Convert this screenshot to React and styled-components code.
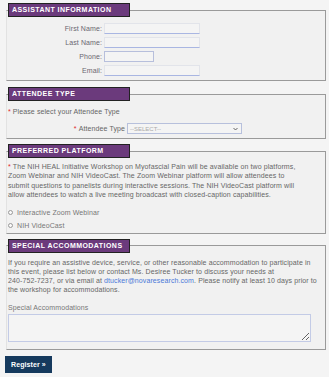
import React from 'react';
import styled, { createGlobalStyle } from 'styled-components';

const GlobalStyle = createGlobalStyle`
  html, body {
    margin: 0;
    padding: 0;
    background: #f4f4f4;
  }
  body {
    font-family: "Liberation Sans", Arial, sans-serif;
    color: #666;
  }
`

const Page = styled.div`
  width: 329px;
  box-sizing: border-box;
  padding: 3px 3px 0 6px;
  display: flex;
  flex-direction: column;
`

const Fieldset = styled.fieldset`
  margin: ${props => props.top || 0}px 0 0 0;
  padding: ${props => props.pad || '0 2px 4px 1px'};
  border: 1px solid #9a9a9a;
  border-left-color: #e2e2e2;
  background: #f1f1f1;
  min-width: 0;
`

const Legend = styled.legend`
  box-sizing: border-box;
  width: 122px;
  height: 14px;
  margin: 0;
  padding: 0 3px;
  background-color: #6b3a7c;
  border: 1px solid #222;
  color: #fff;
  font: bold 7px/12px "Liberation Sans", Arial, sans-serif;
  letter-spacing: 0.45px;
  text-transform: uppercase;
  white-space: nowrap;
`

const Rows = styled.div`
  display: grid;
  grid-template-columns: 94px auto;
  column-gap: 2px;
  row-gap: 3px;
  padding-top: 6px;
  align-items: center;
`

const Label = styled.label`
  font-size: 7px;
  letter-spacing: 0.1px;
  text-align: right;
  color: #6a6670;
  white-space: nowrap;
`

const Input = styled.div`
  box-sizing: border-box;
  width: ${props => props.w}px;
  height: 11px;
  background: #f4f4f4;
  border: 1px solid ${props => (props.boxed ? '#b7bfdc' : '#e2e4ea')};
  border-bottom-color: ${props => (props.boxed ? '#b7bfdc' : '#a9b6e2')};
`

const Text = styled.p`
  margin: 0;
  font-size: 7px;
  letter-spacing: 0.1px;
  line-height: ${props => props.lh || 9}px;
  padding-top: ${props => props.pt || 0}px;
  white-space: nowrap;
  color: #666;
`

const Req = styled.span`
  color: #e0262a;
  margin-right: 2px;
`

const SelectRow = styled.div`
  display: flex;
  align-items: center;
  margin-top: 7px;
`

const SelectLabel = styled.label`
  width: 117px;
  text-align: right;
  font-size: 7px;
  letter-spacing: 0.1px;
  margin-right: 2px;
  white-space: nowrap;
`

const Select = styled.div`
  box-sizing: border-box;
  width: 115px;
  height: 11px;
  border: 1px solid #b7c0dc;
  background: #f4f4f4;
  display: flex;
  align-items: center;
  justify-content: space-between;
  padding: 0 3px 0 2px;
  font-size: 6px;
  color: #aaa;
`

const Radios = styled.div`
  display: flex;
  flex-direction: column;
  gap: 4px;
  margin-top: 8px;
`

const RadioItem = styled.label`
  display: flex;
  align-items: center;
  gap: 4px;
  font-size: 7px;
  letter-spacing: 0.1px;
  line-height: 9px;
  color: #777;
`

const Circle = styled.span`
  box-sizing: border-box;
  width: 5px;
  height: 5px;
  border-radius: 50%;
  border: 1px solid #999;
  background: #fafafa;
`

const Link = styled.a`
  color: #4a78d8;
  text-decoration: none;
`

const FieldLabel = styled.div`
  font-size: 7px;
  letter-spacing: 0.1px;
  line-height: 9px;
  margin-top: 9px;
  color: #777;
`

const TextArea = styled.textarea`
  display: block;
  box-sizing: border-box;
  width: 303px;
  height: 28px;
  margin: 2px 0 0 0;
  border: 1px solid #c3cbe6;
  background: #f4f4f4;
  resize: both;
  padding: 0;
`

const Button = styled.button`
  align-self: flex-start;
  margin: 6px 0 0 -1px;
  height: 17px;
  padding: 0 6px;
  background: #163a5e;
  border: none;
  color: #fff;
  font: bold 7px "Liberation Sans", Arial, sans-serif;
  letter-spacing: 0.1px;
  cursor: pointer;
`

const Chevron = () => (
  <svg width="5" height="4" viewBox="0 0 5 4">
    <path d="M0.5 1 L2.5 3 L4.5 1" fill="none" stroke="#555" strokeWidth="0.9" />
  </svg>
)

const App = () => (
  <Page>
    <GlobalStyle />
    <Fieldset pad="0 2px 4px 1px">
      <Legend>Assistant Information</Legend>
      <Rows>
        <Label>First Name:</Label>
        <Input w={96} />
        <Label>Last Name:</Label>
        <Input w={96} />
        <Label>Phone:</Label>
        <Input w={50} boxed />
        <Label>Email:</Label>
        <Input w={96} />
      </Rows>
    </Fieldset>

    <Fieldset top={6} pad="0 2px 4px 1px">
      <Legend>Attendee Type</Legend>
      <Text pt={6}><Req>*</Req>Please select your Attendee Type</Text>
      <SelectRow>
        <SelectLabel><Req>*</Req>Attendee Type</SelectLabel>
        <Select>
          <span>--SELECT--</span>
          <Chevron />
        </Select>
      </SelectRow>
    </Fieldset>

    <Fieldset top={5} pad="0 2px 3px 1px">
      <Legend>Preferred Platform</Legend>
      <Text pt={4} lh={9.4}>
        <Req>*</Req>The NIH HEAL Initiative Workshop on Myofascial Pain will be available on two platforms,<br />
        Zoom Webinar and NIH VideoCast. The Zoom Webinar platform will allow attendees to<br />
        submit questions to panelists during interactive sessions. The NIH VideoCast platform will<br />
        allow attendees to watch a live meeting broadcast with closed-caption capabilities.
      </Text>
      <Radios>
        <RadioItem><Circle />Interactive Zoom Webinar</RadioItem>
        <RadioItem><Circle />NIH VideoCast</RadioItem>
      </Radios>
    </Fieldset>

    <Fieldset top={5} pad="0 2px 7px 1px">
      <Legend>Special Accommodations</Legend>
      <Text pt={5} lh={9.2}>
        If you require an assistive device, service, or other reasonable accommodation to participate in<br />
        this event, please list below or contact Ms. Desiree Tucker to discuss your needs at<br />
        240-752-7237, or via email at <Link href="#">dtucker@novaresearch.com</Link>. Please notify at least 10 days prior to<br />
        the workshop for accommodations.
      </Text>
      <FieldLabel>Special Accommodations</FieldLabel>
      <TextArea />
    </Fieldset>

    <Button>Register »</Button>
  </Page>
)

export default App;
